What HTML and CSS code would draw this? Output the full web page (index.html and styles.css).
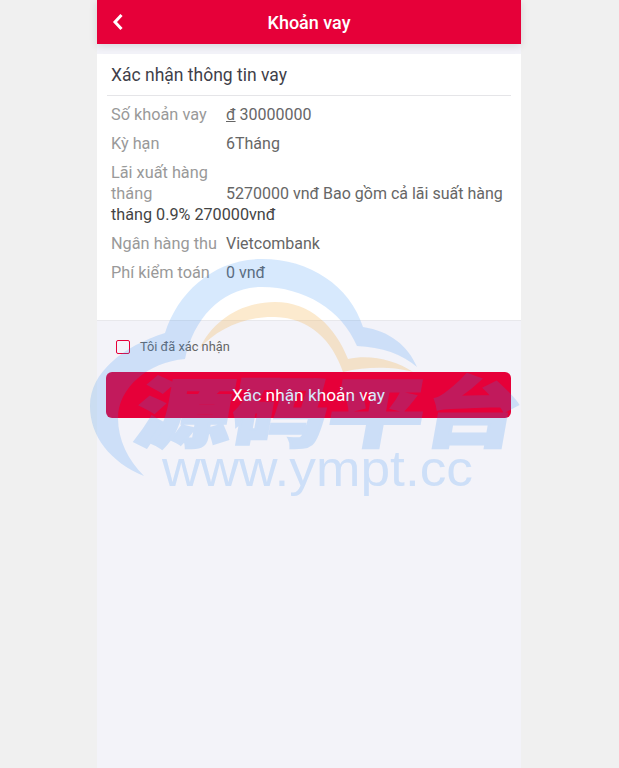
FILE: index.html
```html
<!DOCTYPE html>
<html lang="vi">

<head>
    <meta charset="UTF-8">
    <meta name="viewport" content="width=device-width, initial-scale=1.0">
    <title>Khoản vay</title>
    <link rel="stylesheet" href="styles.css">
</head>

<body>
    <div class="app">
        <header class="topbar">
            <a class="back" href="#">
                <svg width="12" height="18" viewBox="0 0 12 18"><path d="M9.5 2 L3 9 L9.5 16" fill="none" stroke="#fff" stroke-width="3"/></svg>
            </a>
            <h1>Khoản vay</h1>
        </header>

        <section class="card">
            <h2 class="card-title">Xác nhận thông tin vay</h2>
            <div class="rows">
                <p class="row"><span class="label">Số khoản vay</span><span class="value"><u>đ</u> 30000000</span></p>
                <p class="row"><span class="label">Kỳ hạn</span><span class="value">6Tháng</span></p>
                <p class="row"><span class="label">Lãi xuất hàng tháng</span><span class="value">5270000 vnđ Bao gồm cả lãi suất hàng</span> <span class="note">tháng 0.9% 270000vnđ</span></p>
                <p class="row"><span class="label">Ngân hàng thu</span><span class="value">Vietcombank</span></p>
                <p class="row"><span class="label">Phí kiểm toán</span><span class="value">0 vnđ</span></p>
            </div>
        </section>

        <label class="agree"><span class="check"></span>Tôi đã xác nhận</label>
        <button class="submit">Xác nhận khoản vay</button>
    </div>

    <!-- watermark -->
    <svg class="watermark" width="619" height="768" viewBox="0 0 619 768">
        <path class="wm-orange" d="M200 348 C212 322 240 302 275 302 C310 302 335 326 348 359 C370 354 395 360 413 372 C395 367 368 366 343 372 C332 340 310 318 275 317 C244 316 216 330 200 348 Z"/>
        <path class="wm-blue" d="M144 476 C110 462 90 436 90 406 C90 372 124 346 165 333 C178 292 214 259 262 259 C310 259 350 286 363 327 C390 331 408 346 417 367 C402 354 382 347 357 346 C342 310 304 287 262 287 C224 287 194 316 185 359 C148 362 118 388 118 418 C118 440 128 460 144 476 Z"/>
        <text class="wm-cjk" transform="translate(132 441) skewX(-10) scale(1.2 0.95)">源码平台</text>
        <text class="wm-url" x="162" y="486" textLength="311" lengthAdjust="spacingAndGlyphs">www.ympt.cc</text>
    </svg>
</body>

</html>
```

FILE: styles.css
```css
* {
    box-sizing: border-box;
}

html,
body {
    height: 100%;
}

body {
    margin: 0;
    background-color: #f0f0f0;
    font-family: Roboto, "Noto Sans", sans-serif;
    overflow: hidden;
}

.app {
    width: 424px;
    height: 768px;
    margin-left: 97px;
    background-color: #f3f3f9;
}

.topbar {
    position: relative;
    height: 44px;
    display: flex;
    align-items: center;
    justify-content: center;
    background-color: #e60039;
    box-shadow: 0 2px 8px rgba(0, 0, 0, 0.12);
}

.topbar h1 {
    margin: 0;
    color: #fff;
    font-size: 18px;
    font-weight: 500;
}

.back {
    position: absolute;
    left: 15px;
    top: 13px;
    display: block;
    line-height: 0;
}

.card {
    margin-top: 10px;
    height: 267px;
    padding: 0 10px;
    background-color: #fff;
    border-bottom: 1px solid #e8e8ec;
}

.card-title {
    margin: 0;
    height: 42px;
    padding: 10px 4px 0;
    font-size: 17.5px;
    line-height: 22px;
    font-weight: 400;
    color: #3f3f4a;
    border-bottom: 1px solid #e5e5e8;
}

.rows {
    padding: 8px 4px 0;
}

.row {
    margin: 0 0 8px;
    font-size: 16px;
    line-height: 21px;
}

.label {
    display: inline-block;
    width: 115px;
    font-size: 16.3px;
    color: #999;
}

.value {
    color: #666;
}

.note {
    font-size: 16.2px;
    color: #444;
}

.agree {
    display: flex;
    align-items: center;
    margin: 19px 0 0 19px;
    font-size: 12.8px;
    line-height: 14px;
    color: #666;
}

.check {
    width: 14px;
    height: 14px;
    margin-right: 10px;
    border: 1px solid #e60039;
    border-radius: 2px;
}

.submit {
    display: block;
    width: 405px;
    height: 46px;
    margin: 18px 0 0 9px;
    border: none;
    border-radius: 6px;
    background-color: #e60039;
    color: #fff;
    font-family: inherit;
    font-size: 17.3px;
}

.watermark {
    position: absolute;
    left: 0;
    top: 0;
    pointer-events: none;
}

.wm-blue {
    fill: rgba(40, 137, 242, 0.19);
}

.wm-orange {
    fill: rgba(245, 170, 60, 0.25);
}

.wm-cjk {
    font-family: "Noto Sans CJK SC", sans-serif;
    font-size: 80px;
    font-weight: 900;
    fill: #2889f2;
    stroke: #2889f2;
    stroke-width: 2.5px;
    opacity: 0.19;
}

.wm-url {
    font-family: "Liberation Sans", sans-serif;
    font-size: 50px;
    fill: rgba(40, 137, 242, 0.19);
}
```
